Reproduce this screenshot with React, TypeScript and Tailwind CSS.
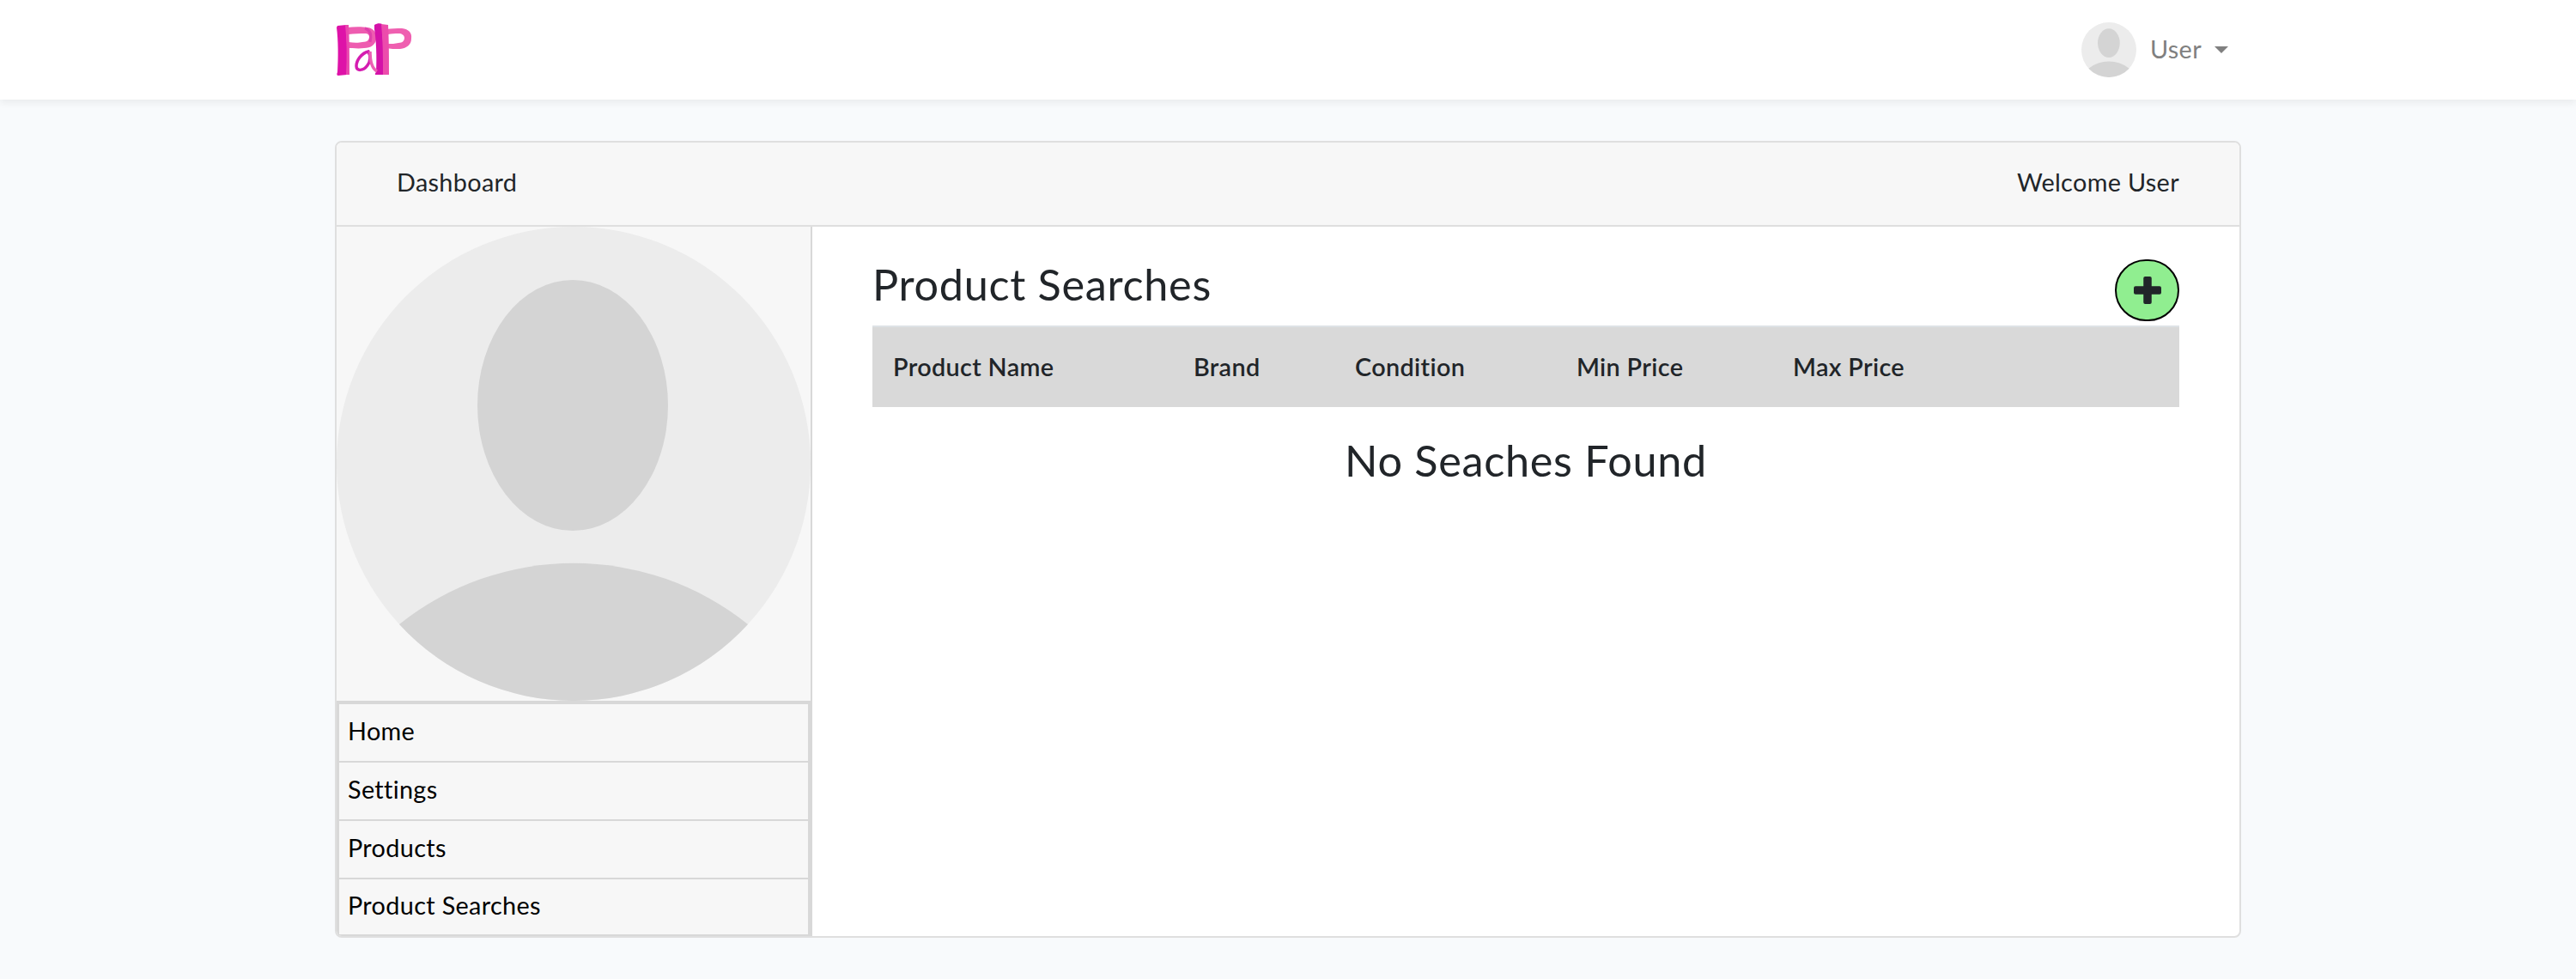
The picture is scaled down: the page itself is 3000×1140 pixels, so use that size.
const links = ["Home", "Settings", "Products", "Product Searches"];

const columns = [
  { label: "Product Name", width: "w-[350px]" },
  { label: "Brand", width: "w-[188px]" },
  { label: "Condition", width: "w-[258px]" },
  { label: "Min Price", width: "w-[252px]" },
  { label: "Max Price", width: "" },
];

function Avatar({ className }: { className: string }) {
  return (
    <svg viewBox="0 0 552 552" className={className}>
      <circle cx="276" cy="276" r="276" fill="#ececec" />
      <ellipse cx="275" cy="208" rx="111" ry="146" fill="#d4d4d4" />
      <path d="M73 463A325 325 0 0 1 479 463A276 276 0 0 1 73 463Z" fill="#d4d4d4" />
    </svg>
  );
}

function Logo() {
  return (
    <svg viewBox="0 0 88 62" className="w-[88px] h-[62px]">
      {/* first bowl */}
      <path fillRule="evenodd" d="M12 5C20 4 30 4 36 5C44 6 47 12 46 19C45 25 40 29 32 29C26 30 18 29 12 29ZM14 13V22C20 23 26 23 30 22C36 22 38 19 38 16C38 13 36 12 33 12C27 12 20 12 14 13Z" fill="#ee5cb0" />
      <path d="M33 6C39 8 41 14 39 22" fill="none" stroke="#e040ac" strokeWidth="3" />
      {/* second bowl */}
      <path fillRule="evenodd" d="M58 7C64 6 70 6 76 6C84 7 88 11 87 18C87 25 82 29 74 30C68 30 62 30 58 29ZM60 13V24C64 24 68 24 72 23C77 23 79 20 79 17C79 14 76 12 72 12C68 12 64 12 60 13Z" fill="#ef5fb0" />
      {/* stems */}
      <path d="M1 3L11 2C12 20 13 40 12 60L2 61C0 61 0 59 1 57C2 40 2 20 0 5Z" fill="#de12a8" />
      <path d="M10 2L14 2C15 20 15 42 15 60L11 60C12 40 12 20 10 2Z" fill="#ea48ae" />
      <path d="M44 2C47 0 51 0 53 1C54 20 55 40 55 60L46 60C44 60 45 58 46 57C47 40 46 18 44 7Z" fill="#d412a8" />
      <path d="M52 1L60 2C61 20 61 42 61 60L54 60C54 40 54 20 52 1Z" fill="#ec4cac" />
      {/* small a */}
      <path d="M37 33C29 35 23 43 23 50C23 56 31 56 36 49C39 45 40 39 37 33Z" fill="none" stroke="#d41cb0" strokeWidth="3.5" />
      <path d="M39 33C39 42 40 52 47 56" fill="none" stroke="#ec60b4" strokeWidth="3.5" />
    </svg>
  );
}

export default function App() {
  return (
    <div className="min-h-[1140px] bg-[#f8fafc] font-['Lato','Noto_Sans',sans-serif] text-[28.8px] tracking-[0.35px] text-[#212529]">
      <nav className="h-[116px] bg-white shadow-[0_4px_8px_rgba(0,0,0,0.06)]">
        <div className="w-[2220px] mx-auto h-full flex items-center justify-between">
          <div className="pl-[2px]">
            <Logo />
          </div>
          <div className="flex items-center mr-[15px] text-[#808080]">
            <Avatar className="w-[64px] h-[64px]" />
            <span className="ml-[16px]">User</span>
            <span className="ml-[15px] w-0 h-0 border-x-[8px] border-x-transparent border-t-[8px] border-t-[#808080]" />
          </div>
        </div>
      </nav>

      <div className="w-[2220px] mx-auto mt-[48px] h-[928px] flex flex-col bg-white border-2 border-[#dfdfdf] rounded-[8px] overflow-hidden">
        <div className="h-[98px] shrink-0 bg-[#f7f7f7] border-b-2 border-[#dfdfdf] pl-[70px] pr-[70px] pb-[2px] flex items-center justify-between">
          <span>Dashboard</span>
          <span>Welcome User</span>
        </div>

        <div className="flex flex-1 min-h-0">
          <aside className="w-[554px] shrink-0 bg-[#f7f7f7] border-r-2 border-[#d8d8d8] flex flex-col">
            <Avatar className="w-[552px] h-[552px] shrink-0" />
            <ul className="flex-1 border-y-2 border-[#d8d8d8] text-black">
              {links.map((l) => (
                <li key={l} className="h-[68px] flex items-center pl-[10px] pb-[3px] border-x-[3px] border-t-2 border-[#d8d8d8] last:border-b-2">
                  {l}
                </li>
              ))}
            </ul>
          </aside>

          <main className="flex-1 pl-[70px] pr-[70px]">
            <div className="h-[115px] flex items-center justify-between">
              <h3 className="text-[50.4px] leading-[60px] mt-[18px] tracking-[0.7px]">Product Searches</h3>
              <button className="w-[75px] h-[72px] mt-[33px] rounded-full bg-[#90ee90] border-2 border-black flex items-center justify-center">
                <svg viewBox="0 0 32 32" className="w-[32px] h-[32px]">
                  <rect x="11.25" y="0" width="9.5" height="32" rx="2" fill="#212529" />
                  <rect x="0" y="11.25" width="32" height="9.5" rx="2" fill="#212529" />
                </svg>
              </button>
            </div>
            <table className="w-full table-fixed">
              <thead>
                <tr className="bg-[#d9d9d9] border-t-2 border-[#dee2e6]">
                  {columns.map((c) => (
                    <th key={c.label} className={`${c.width} h-[94px] pl-[24px] text-left font-semibold`}>
                      {c.label}
                    </th>
                  ))}
                </tr>
              </thead>
            </table>
            <h3 className="text-[50.4px] leading-[60px] text-center mt-[32px] tracking-[0.7px]">No Seaches Found</h3>
          </main>
        </div>
      </div>
    </div>
  );
}
